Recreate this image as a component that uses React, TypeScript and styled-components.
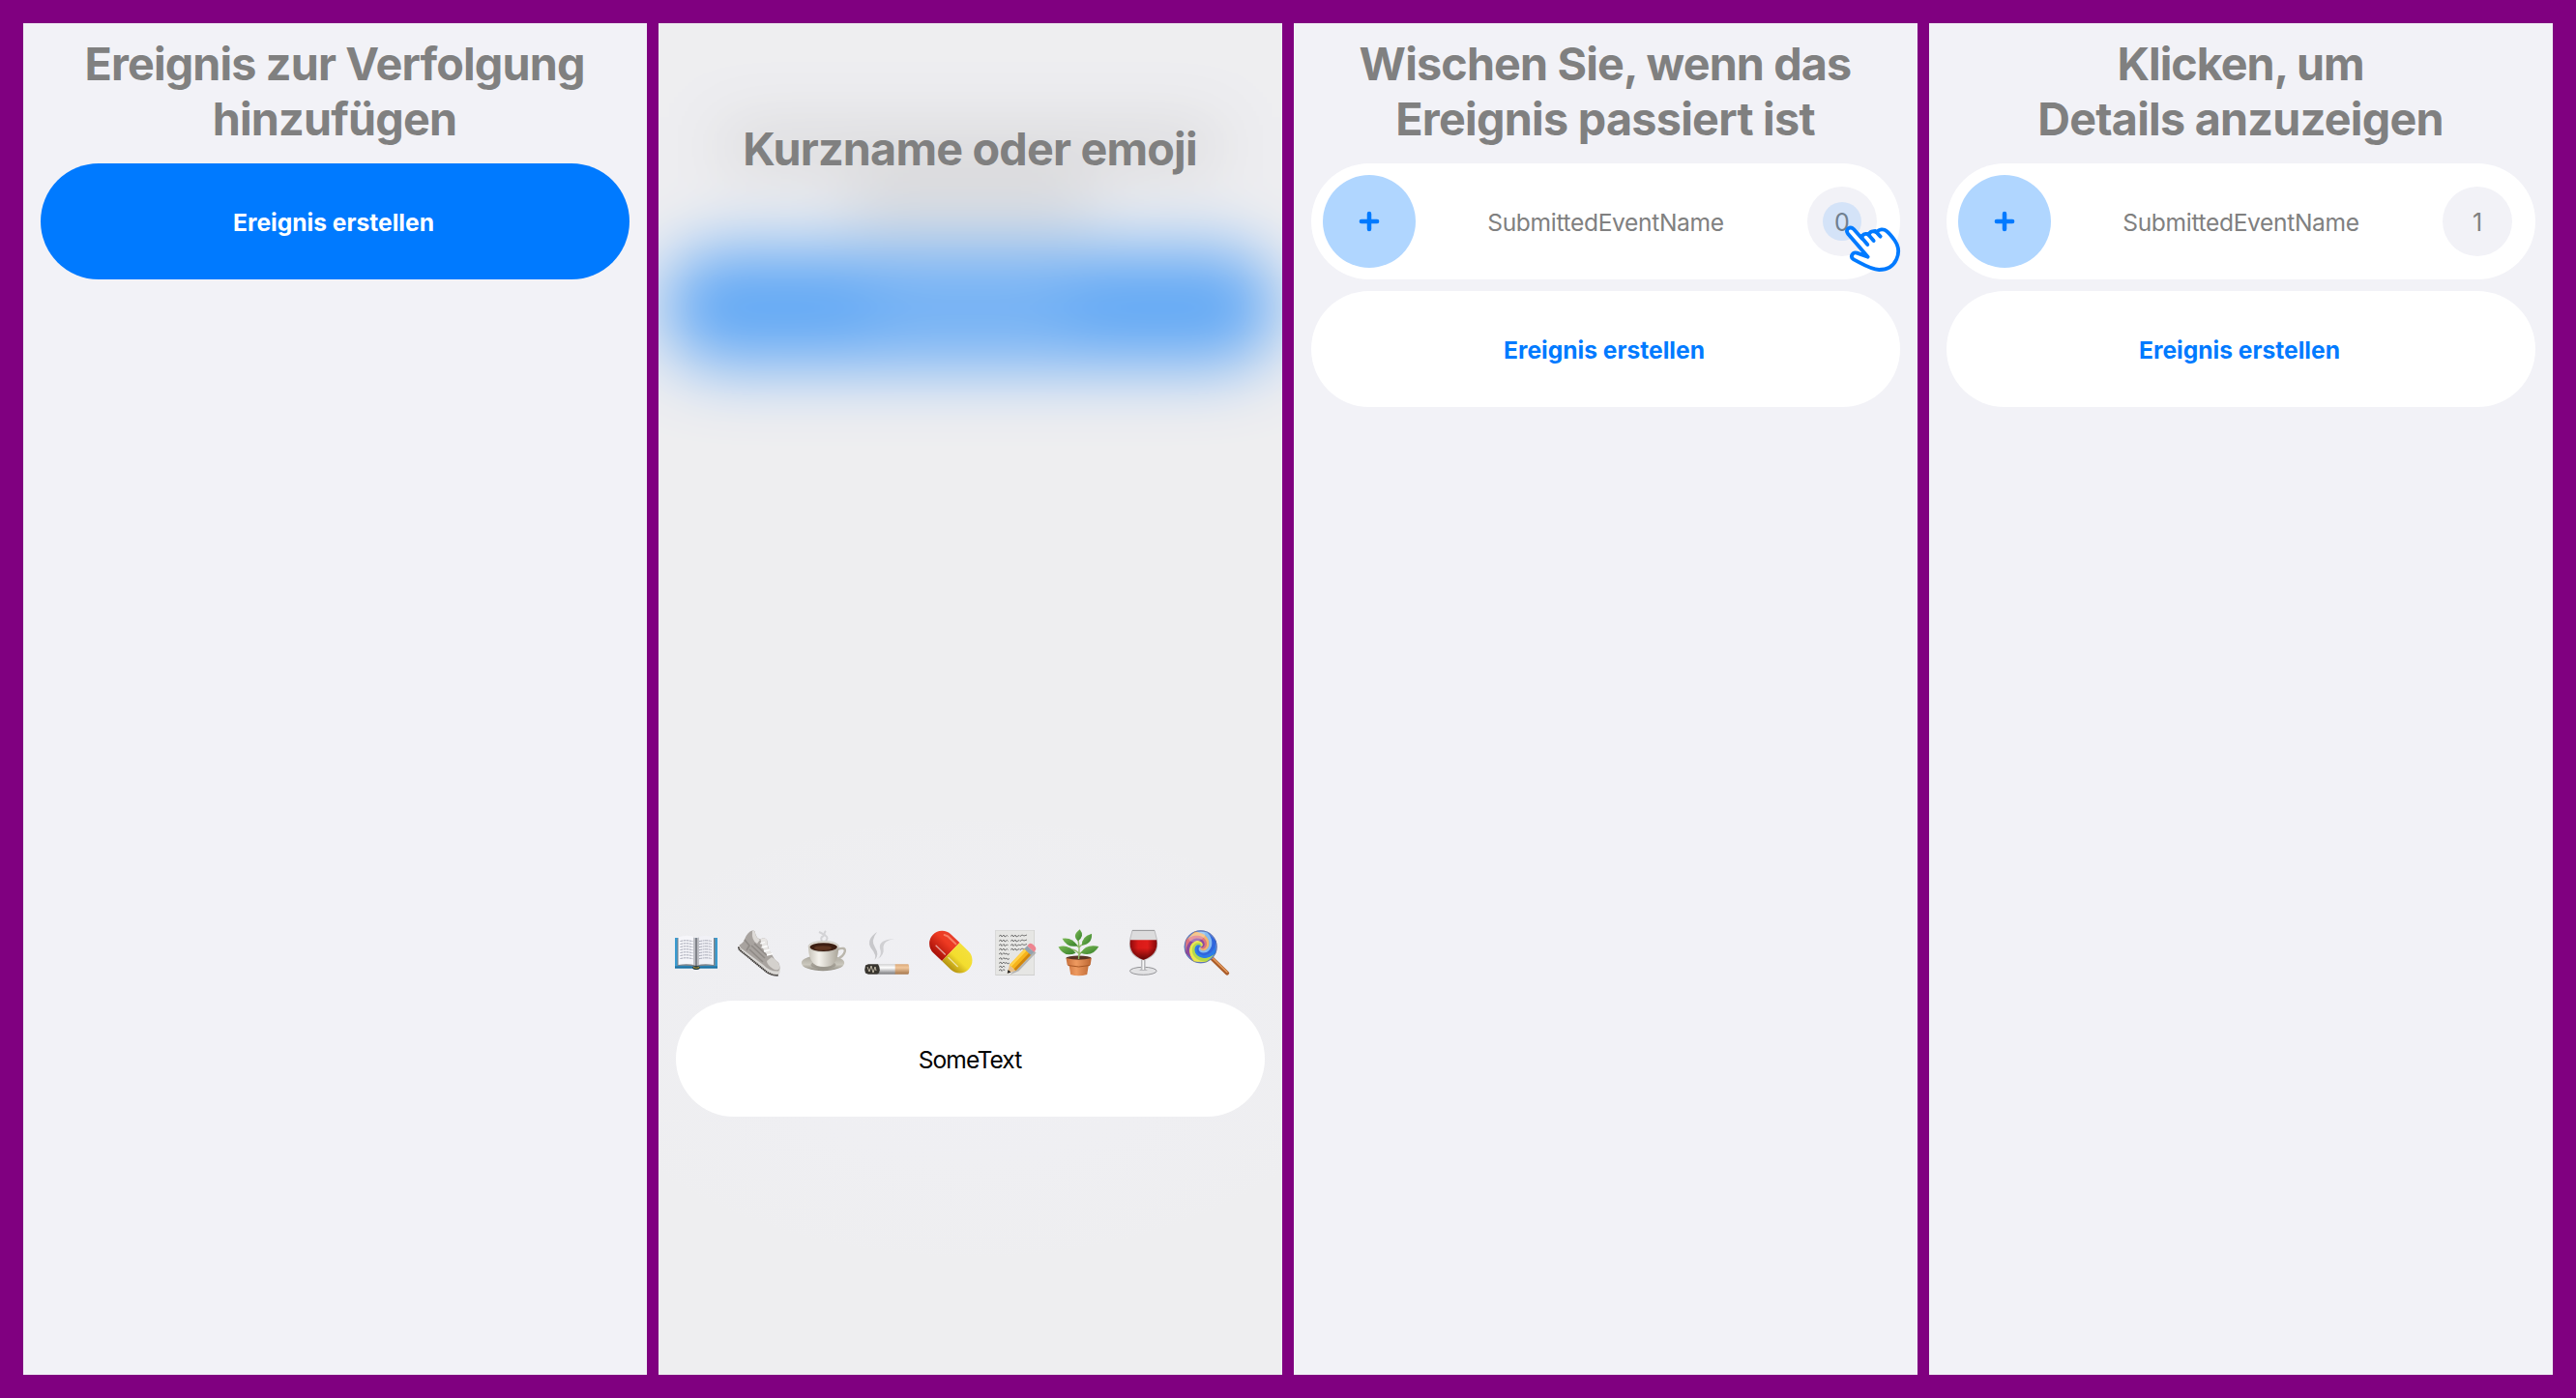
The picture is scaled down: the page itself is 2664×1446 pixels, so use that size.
import React from 'react';
import styled, { createGlobalStyle } from 'styled-components';

const BLUE = '#007aff';

const GlobalStyle = createGlobalStyle`
  * { box-sizing: border-box; }
  body { margin: 0; background: #800080; font-family: Inter, "Liberation Sans", sans-serif; }
`;

const Board = styled.main`
  display: flex;
  gap: 12px;
  width: 2664px;
  height: 1446px;
  padding: 24px;
  background: #800080;
`;

const Screen = styled.section`
  position: relative;
  flex: none;
  display: flex;
  flex-direction: column;
  width: 645px;
  height: 1398px;
  padding: 14px 18px 0;
  background: #f2f2f7;
  overflow: hidden;
`;

const Title = styled.h1`
  margin: 0 -18px 17px;
  padding-right: 1px;
  font-size: 46.7px;
  line-height: 57px;
  font-weight: 680;
  text-align: center;
  color: #808080;
`;

const Line = styled.span<{ $spacing?: number }>`
  display: block;
  white-space: nowrap;
  letter-spacing: ${(p) => p.$spacing ?? -0.85}px;
`;

const List = styled.div`
  display: flex;
  flex-direction: column;
  gap: 12px;
`;

const Pill = styled.button<{ $primary?: boolean }>`
  display: flex;
  align-items: center;
  justify-content: center;
  width: 100%;
  height: 120px;
  padding: 1px 3px 0 0;
  border: 0;
  border-radius: 60px;
  background: ${(p) => (p.$primary ? BLUE : '#fff')};
  color: ${(p) => (p.$primary ? '#fff' : BLUE)};
  font: 680 24.6px/30px Inter, "Liberation Sans", sans-serif;
`;

const EventRow = styled.div`
  display: grid;
  grid-template-columns: 96px 1fr 96px;
  align-items: center;
  height: 120px;
  padding: 0 12px;
  border-radius: 60px;
  background: #fff;
`;

const AddCircle = styled.div`
  display: flex;
  align-items: center;
  justify-content: center;
  width: 96px;
  height: 96px;
  border-radius: 50%;
  background: #b0d6ff;
`;

const EventName = styled.span`
  padding-top: 1px;
  text-align: center;
  font-size: 24.6px;
  line-height: 30px;
  color: #808080;
  letter-spacing: -0.35px;
`;

const Count = styled.div`
  position: relative;
  display: flex;
  align-items: center;
  justify-content: center;
  width: 72px;
  height: 72px;
  margin-left: 12px;
  padding-top: 1px;
  border-radius: 50%;
  background: #f2f2f7;
  color: #808080;
  font-size: 25px;
`;

const TouchDot = styled.i`
  position: absolute;
  left: 16px;
  top: 16px;
  width: 40px;
  height: 40px;
  border-radius: 50%;
  background: rgba(0, 122, 255, 0.12);
`;

const Hand = styled.svg`
  position: absolute;
  left: 36px;
  top: 37px;
  width: 63.33px;
  height: 53.33px;
`;

const Backdrop = styled.div`
  position: absolute;
  inset: -80px;
  display: flex;
  flex-direction: column;
  align-items: center;
  padding-top: 192px;
  background: #f2f2f7;
  filter: blur(34px);
`;

const GhostLine = styled.div<{ $width: number }>`
  width: ${(p) => p.$width}px;
  height: 32px;
  margin-bottom: 25px;
  background: rgba(128, 128, 128, 0.48);
`;

const GhostPill = styled.div`
  display: flex;
  align-items: center;
  justify-content: center;
  width: 637px;
  height: 122px;
  margin-top: 7px;
  border-radius: 60px;
  background: ${BLUE};
`;

const GhostLabel = styled.div`
  width: 207px;
  height: 18px;
  background: rgba(255, 255, 255, 0.48);
`;

const Material = styled.div`
  position: absolute;
  inset: 0;
  background:
    radial-gradient(ellipse 430px 240px at 50% 1050px, rgba(242, 242, 249, 0.5), rgba(242, 242, 249, 0)),
    rgba(232, 232, 231, 0.43);
`;

const Sheet = styled.div`
  position: relative;
  display: flex;
  flex-direction: column;
  height: 100%;
  padding-top: 88px;
`;

const EmojiBar = styled.div`
  display: flex;
  gap: 18px;
  margin: auto 0 26px -3px;
`;

const Emoji = styled.svg`
  flex: none;
  width: 48px;
  height: 48px;
  overflow: visible;
`;

const Field = styled.div`
  display: flex;
  align-items: center;
  justify-content: center;
  height: 120px;
  margin-bottom: 267px;
  padding: 1px 1px 0 0;
  border-radius: 60px;
  background: #fff;
  color: #000;
  font-size: 24.6px;
  line-height: 30px;
  letter-spacing: -0.95px;
`;

const Plus = () => (
  <svg width="22" height="22" viewBox="0 0 22 22">
    <path d="M11 2.900V19.100M2.900 11H19.100" stroke={BLUE} strokeWidth="4.500" strokeLinecap="round" />
  </svg>
);

const PointingHand = () => (
  <Hand viewBox="195 210 190 160" fill="#fff" stroke={BLUE} strokeWidth="11.500" strokeLinecap="round" strokeLinejoin="round">
    <path d="M275 317 L213 245 C204 232 220 220 231 231 L257 260 C254 249 267 241 279 249 C279 239 292 234 303 241 C309 230 325 230 333 237 C343 245 352 257 359 267 C382 301 365 357 310 357 C284 356 262 341 231 325 C218 317 228 301 241 305 Z" />
    <path d="M252 253 L274 279 M275 246 L293 267 M298 237 L314 254" fill="none" />
  </Hand>
);

const Book = () => (
  <Emoji viewBox="0 0 48 48">
    <path d="M2 9h44v31.500H27q-3 2.500-6 0H2z" fill="#3a9bd0" />
    <path d="M2 38.500h44v2H27q-3 2.500-6 0H2z" fill="#1f6f9e" />
    <path d="M4.500 9.500V38q10-1 19 1 9-2 20-1V9.500z" fill="#7d8288" />
    <path d="M5.500 8.500q10-3.500 18 .5v28.500q-8-2-18-.5z" fill="#f6f6fa" />
    <path d="M24.500 9q8-4 17.500-.5V37q-10-1.500-17.500.5z" fill="#f1f1f6" />
    <path d="M21 8.500l3 1 3-1V37l-3 1-3-1z" fill="#9b9ca3" opacity=".6" />
    <path d="M24 9v29" stroke="#54565c" strokeWidth=".9" />
    {[12.5, 15.5, 18.5, 21.5, 24.5, 27.5, 30.5].map((y) => (
      <path key={y} d={`M7.500 ${y}q6-1.500 13 .2M27 ${y + 0.2}q7-1.700 13-.2`} stroke="#9b9dac" strokeWidth=".9" strokeDasharray="3 .6 2 .5" fill="none" />
    ))}
    <ellipse cx="24" cy="40" rx="3.800" ry="1.900" fill="#283c3c" />
    <path d="M21 39.500q3 1.500 6 0" stroke="#b79a33" strokeWidth="1" fill="none" />
  </Emoji>
);

const Shoe = () => (
  <Emoji viewBox="0 0 48 48">
    <path d="M2 17Q1 20 4 22L31 44Q39 49.500 43 47.500 45.500 45 44.500 40L38 32z" fill="#d9d7d4" />
    <path d="M2 18.500Q1.500 20.500 4 22.500L31 44.500Q38 48.800 43 47.500" fill="none" stroke="#3d3936" strokeWidth="1.800" strokeDasharray="1.600 .4" />
    <path d="M2.500 16.500Q7 14 8 10.500 11 3 16 1.600 19 .8 19 4 20 9.500 24.500 10.500 29 7.500 31.500 12 31.500 20 36 25.500 38 31 43 34.500 46 40 43 43.500 34 44 28 37.500L4 19.500z" fill="#a8a39f" />
    <path d="M16 2Q19 1 19 4.500 20 9 24 11L21 15Q15 12 16 2z" fill="#dddad7" />
    <path d="M24.500 10.500Q29 7.500 31.500 12 31 20 36 25L31 27Q25 18 24.500 10.500z" fill="#e8e6e4" />
    <path d="M36 29Q44 33 44.500 40 43 43.500 38 41.500 31 37 31 33z" fill="#d4d1cd" />
    <path d="M8 11L13 17 10 22M15 17L29 30M18 15L31 27M13 21L27 34" stroke="#8f8a86" strokeWidth="1.600" fill="none" />
    <path d="M25.500 19l6-1.500M28 23l6-1.500M31 27l6-1.500M24 15l5-1.500" stroke="#fff" strokeWidth="1.300" />
  </Emoji>
);

const Coffee = () => (
  <Emoji viewBox="0 0 48 48">
    <defs>
      <linearGradient id="cup" x1="0" x2="1"><stop stopColor="#c9c5bb" /><stop offset=".35" stopColor="#f4f2ec" /><stop offset="1" stopColor="#aaa599" /></linearGradient>
      <linearGradient id="saucer" x1="0" y1="0" x2="0" y2="1"><stop stopColor="#a5a197" /><stop offset=".6" stopColor="#cbc8be" /><stop offset="1" stopColor="#8d897f" /></linearGradient>
    </defs>
    <ellipse cx="23" cy="35" rx="22.200" ry="8.200" fill="url(#saucer)" />
    <ellipse cx="23.500" cy="37" rx="13" ry="4" fill="#8d887e" opacity=".6" />
    <path d="M38 21Q46.500 18 45.800 23 44.500 29 36 31.500" stroke="#bab6ac" strokeWidth="2.400" fill="none" />
    <path d="M8 18Q8 34 17 38Q24 40 31 38Q39 34 39.300 18z" fill="url(#cup)" />
    <ellipse cx="23.700" cy="18" rx="15.700" ry="5.500" fill="#e6e3da" stroke="#a9a59a" strokeWidth=".5" />
    <ellipse cx="23.700" cy="18.600" rx="14.200" ry="4.300" fill="#3c1e12" />
    <ellipse cx="23" cy="19.500" rx="9" ry="2.300" fill="#5c3420" />
    <path d="M22 12q-2-3 1-4.500t-4-4.500m7 9q3-3 0-5t0-5" stroke="#c9c9cc" strokeWidth="2" fill="none" opacity=".75" />
  </Emoji>
);

const Cigarette = () => (
  <Emoji viewBox="0 0 48 48">
    <defs>
      <linearGradient id="cig" x1="0" y1="0" x2="0" y2="1"><stop stopColor="#cfcfd0" /><stop offset=".35" stopColor="#fff" /><stop offset="1" stopColor="#77777a" /></linearGradient>
      <linearGradient id="filter" x1="0" y1="0" x2="0" y2="1"><stop stopColor="#d9a878" /><stop offset=".35" stopColor="#f1c79c" /><stop offset="1" stopColor="#a5764b" /></linearGradient>
    </defs>
    <path d="M10.500 32Q13 27 7 20 1 11 13 3 6 12 11 19 16 27 10.500 32z" fill="#c8c8cb" />
    <path d="M13 31Q19 27 16 20 14 11 31 10 20 12 19.500 18 21 28 13 31z" fill="#d0d0d3" />
    <path d="M14 36.200h18v10.500H14z" fill="url(#cig)" />
    <path d="M31.700 36.200H45q1.200 0 1.200 5.200T45 46.700H31.700z" fill="url(#filter)" />
    <path d="M1 37.500l3-1.300h10q2 3 1.800 6-.3 3.500-2.300 4.500H4L1 45.500q-1.500-4 0-8z" fill="#38352f" />
    <path d="M3 39l2 5 2-6 2 7 2-6 1 4" stroke="#c8c0ad" strokeWidth=".9" fill="none" />
  </Emoji>
);

const Capsule = () => (
  <Emoji viewBox="0 0 48 48">
    <defs>
      <linearGradient id="red" x1="0" y1="0" x2="0" y2="1"><stop stopColor="#e8402c" /><stop offset=".35" stopColor="#ee3a22" /><stop offset="1" stopColor="#a81008" /></linearGradient>
      <linearGradient id="yellow" x1="0" y1="0" x2="0" y2="1"><stop stopColor="#f4e03c" /><stop offset=".5" stopColor="#f3dd2e" /><stop offset="1" stopColor="#b49110" /></linearGradient>
    </defs>
    <g transform="translate(23.300 23.600) rotate(44)">
      <path d="M0-13.200H-12.500a13.200 13.200 0 0 0 0 26.400H0z" fill="url(#red)" />
      <path d="M0-13.200H12.500a13.200 13.200 0 0 1 0 26.400H0z" fill="url(#yellow)" />
      <path d="M-17-8Q-14-10-9-9.500H-2" stroke="#ff9a80" strokeWidth="2" fill="none" strokeLinecap="round" opacity=".7" />
      <path d="M-16 6H-2M2 6H16" stroke="#fff" strokeWidth="1.200" opacity=".6" />
    </g>
  </Emoji>
);

const Memo = () => (
  <Emoji viewBox="0 0 48 48">
    <path d="M3.300 1h40.700v47H3.300z" fill="#cfcfce" />
    <path d="M4 1.500h39.300v45.500H4z" fill="#e6e6e4" />
    {[7.5, 12.5, 17, 21.5].map((y) => (
      <path key={y} d={`M7 ${y}l2-1.500 1 2 2-2 1 2 2.500-1.500 1 1 M19 ${y}l2-1.500 1 2 2-2 1 2 3-1.500 1 1 2-1.500 2 1 3-1`} stroke="#5c5c5c" strokeWidth=".8" fill="none" />
    ))}
    {[26, 31, 35.5, 39.5, 43].map((y, i) => (
      <path key={y} d={`M7 ${y}l2-1.500 1 2 2-2 1 1.500${i < 3 ? ' 2-1 1 1.500 2-1' : ''}`} stroke="#5c5c5c" strokeWidth=".8" fill="none" />
    ))}
    <g transform="translate(15.700 45.800) rotate(-46.500)">
      <path d="M1 3l9 4h26V2z" fill="#777" opacity=".45" />
      <path d="M0 0L8-4.500V4.500z" fill="#e6c08c" />
      <path d="M0 0L3.400-2V2z" fill="#222" />
      <path d="M8-4.500H31V4.500H8z" fill="#f6b41b" />
      <path d="M8-4.500H31V-1.700H8z" fill="#ffd24b" />
      <path d="M8 1.800H31V4.500H8z" fill="#cf8510" />
      <path d="M30.500-4.700H35V4.700H30.500z" fill="#93a2ae" />
      <path d="M35-4.700H37q3 0 3 4.700t-3 4.700H35z" fill="#ee8590" />
    </g>
  </Emoji>
);

const Plant = () => (
  <Emoji viewBox="0 0 48 48">
    <defs>
      <linearGradient id="pot" x1="0" x2="1"><stop stopColor="#c8703c" /><stop offset=".4" stopColor="#ee9a60" /><stop offset="1" stopColor="#bb6632" /></linearGradient>
      <linearGradient id="leaf" x1="0" y1="0" x2="1" y2="1"><stop stopColor="#7cb955" /><stop offset="1" stopColor="#35802a" /></linearGradient>
    </defs>
    <ellipse cx="23.500" cy="30" rx="13" ry="2.600" fill="#5a3323" />
    <path d="M23.500 31Q25 19 22.500 9M24 19Q25 17 29 15M23.500 25Q20 21 15 21M24 27Q26 23 32 21M24 19Q21 16 17 14" stroke="#8fb868" strokeWidth="1.400" fill="none" />
    <g fill="url(#leaf)">
      <path d="M24.700.3Q30 7 23 12.300 16 7 24.700.3z" />
      <path d="M37 4.700Q38 15 27 16.800 26 8 37 4.700z" />
      <path d="M44.300 18Q38 29 25.700 24.700 31 15 44.300 18z" />
      <path d="M6.500 9.700Q17 8 22.300 17.300 12 20 6.500 9.700z" />
      <path d="M2.500 18.500Q12 15 20.500 24.700 9 30 2.500 18.500z" />
    </g>
    <path d="M10.500 30q13 3.500 26.200 0l-1 7-2 1-1.500 9q-9 2.500-17 0l-1.500-9-2-1z" fill="url(#pot)" />
    <path d="M12.500 37.500q11 3 22.500 0" stroke="#a85826" strokeWidth="1" fill="none" />
  </Emoji>
);

const Wine = () => (
  <Emoji viewBox="0 0 48 48">
    <defs>
      <linearGradient id="wine" x1="0" x2="1"><stop stopColor="#8d0a0c" /><stop offset=".3" stopColor="#d81a18" /><stop offset=".65" stopColor="#e01e1b" /><stop offset="1" stopColor="#840809" /></linearGradient>
      <linearGradient id="wineShade" x1="0" y1="0" x2="0" y2="1"><stop offset=".4" stopColor="#400" stopOpacity="0" /><stop offset="1" stopColor="#300" stopOpacity=".75" /></linearGradient>
    </defs>
    <ellipse cx="24.300" cy="43.300" rx="13.800" ry="4" fill="#e2e2e4" stroke="#8b8b8f" strokeWidth=".9" />
    <path d="M22 31h4.600v9q0 2.500 3.400 3H19q3-.5 3-3z" fill="#b9b9bc" />
    <path d="M23.500 31h1.500v11h-1.500z" fill="#f8f8f8" />
    <path d="M13 1.300H36Q39 10 38.700 18 37.500 29 24.500 31.700 11.500 29 10.300 18 10 10 13 1.300z" fill="#dcdcdd" stroke="#a9a9ac" strokeWidth=".7" />
    <path d="M13 1.500H36" stroke="#9d9d9f" strokeWidth="1" />
    <path d="M10.900 11.300H38.200Q40.500 26.500 24.500 31.700 8.500 26.500 10.900 11.300z" fill="url(#wine)" />
    <path d="M10.900 11.300H38.200Q40.500 26.500 24.500 31.700 8.500 26.500 10.900 11.300z" fill="url(#wineShade)" />
  </Emoji>
);

const SWIRL = ['#2b7de8', '#b4da48', '#ece84c', '#8d4a9c', '#e0737c', '#f3b56a', '#86bcf0', '#2f66dd'];

function swirlArm(index: number, count: number): string {
  const edge = (offset: number) =>
    Array.from({ length: 25 }, (_, k) => {
      const t = k / 24;
      const a = offset + Math.pow(1 - t, 1.3) * 4.6;
      return `${(17.7 + Math.cos(a) * 17 * t).toFixed(2)} ${(18.3 + Math.sin(a) * 17 * t).toFixed(2)}`;
    });
  const a0 = (index / count) * Math.PI * 2 - 0.4;
  const a1 = ((index + 1.06) / count) * Math.PI * 2 - 0.4;
  return `M${edge(a0).join('L')}L${edge(a1).reverse().join('L')}z`;
}

const Lollipop = () => (
  <Emoji viewBox="0 0 48 48">
    <path d="M29 30L45 45.500" stroke="#a95b28" strokeWidth="4.200" strokeLinecap="round" />
    <path d="M29.500 29.500L45 44.500" stroke="#e59a5c" strokeWidth="1.500" strokeLinecap="round" />
    <circle cx="17.700" cy="18.300" r="17" fill="#6c8fd8" />
    {SWIRL.map((c, i) => (
      <path key={c} d={swirlArm(i, SWIRL.length)} fill={c} />
    ))}
    <circle cx="17.700" cy="18.300" r="16.600" fill="none" stroke="#4b4f86" strokeOpacity=".55" strokeWidth=".9" />
    <ellipse cx="14" cy="8" rx="9" ry="4.500" fill="#fff" opacity=".25" transform="rotate(-22 14 8)" />
  </Emoji>
);

const EventList = ({ count, touching }: { count: number; touching?: boolean }) => (
  <List>
    <EventRow>
      <AddCircle><Plus /></AddCircle>
      <EventName>SubmittedEventName</EventName>
      <Count>
        {count}
        {touching && <><TouchDot /><PointingHand /></>}
      </Count>
    </EventRow>
    <Pill>Ereignis erstellen</Pill>
  </List>
);

export default function App() {
  return (
    <>
      <GlobalStyle />
      <Board>
        <Screen>
          <Title>
            <Line>Ereignis zur Verfolgung</Line>
            <Line $spacing={-0.8}>hinzufügen</Line>
          </Title>
          <Pill $primary>Ereignis erstellen</Pill>
        </Screen>
        <Screen>
          <Backdrop>
            <GhostLine $width={513} />
            <GhostLine $width={249} />
            <GhostPill><GhostLabel /></GhostPill>
          </Backdrop>
          <Material />
          <Sheet>
            <Title><Line $spacing={-0.8}>Kurzname oder emoji</Line></Title>
            <EmojiBar>
              <Book /><Shoe /><Coffee /><Cigarette /><Capsule /><Memo /><Plant /><Wine /><Lollipop />
            </EmojiBar>
            <Field>SomeText</Field>
          </Sheet>
        </Screen>
        <Screen>
          <Title>
            <Line>Wischen Sie, wenn das</Line>
            <Line $spacing={-0.72}>Ereignis passiert ist</Line>
          </Title>
          <EventList count={0} touching />
        </Screen>
        <Screen>
          <Title>
            <Line $spacing={-1}>Klicken, um</Line>
            <Line $spacing={-0.75}>Details anzuzeigen</Line>
          </Title>
          <EventList count={1} />
        </Screen>
      </Board>
    </>
  );
}
